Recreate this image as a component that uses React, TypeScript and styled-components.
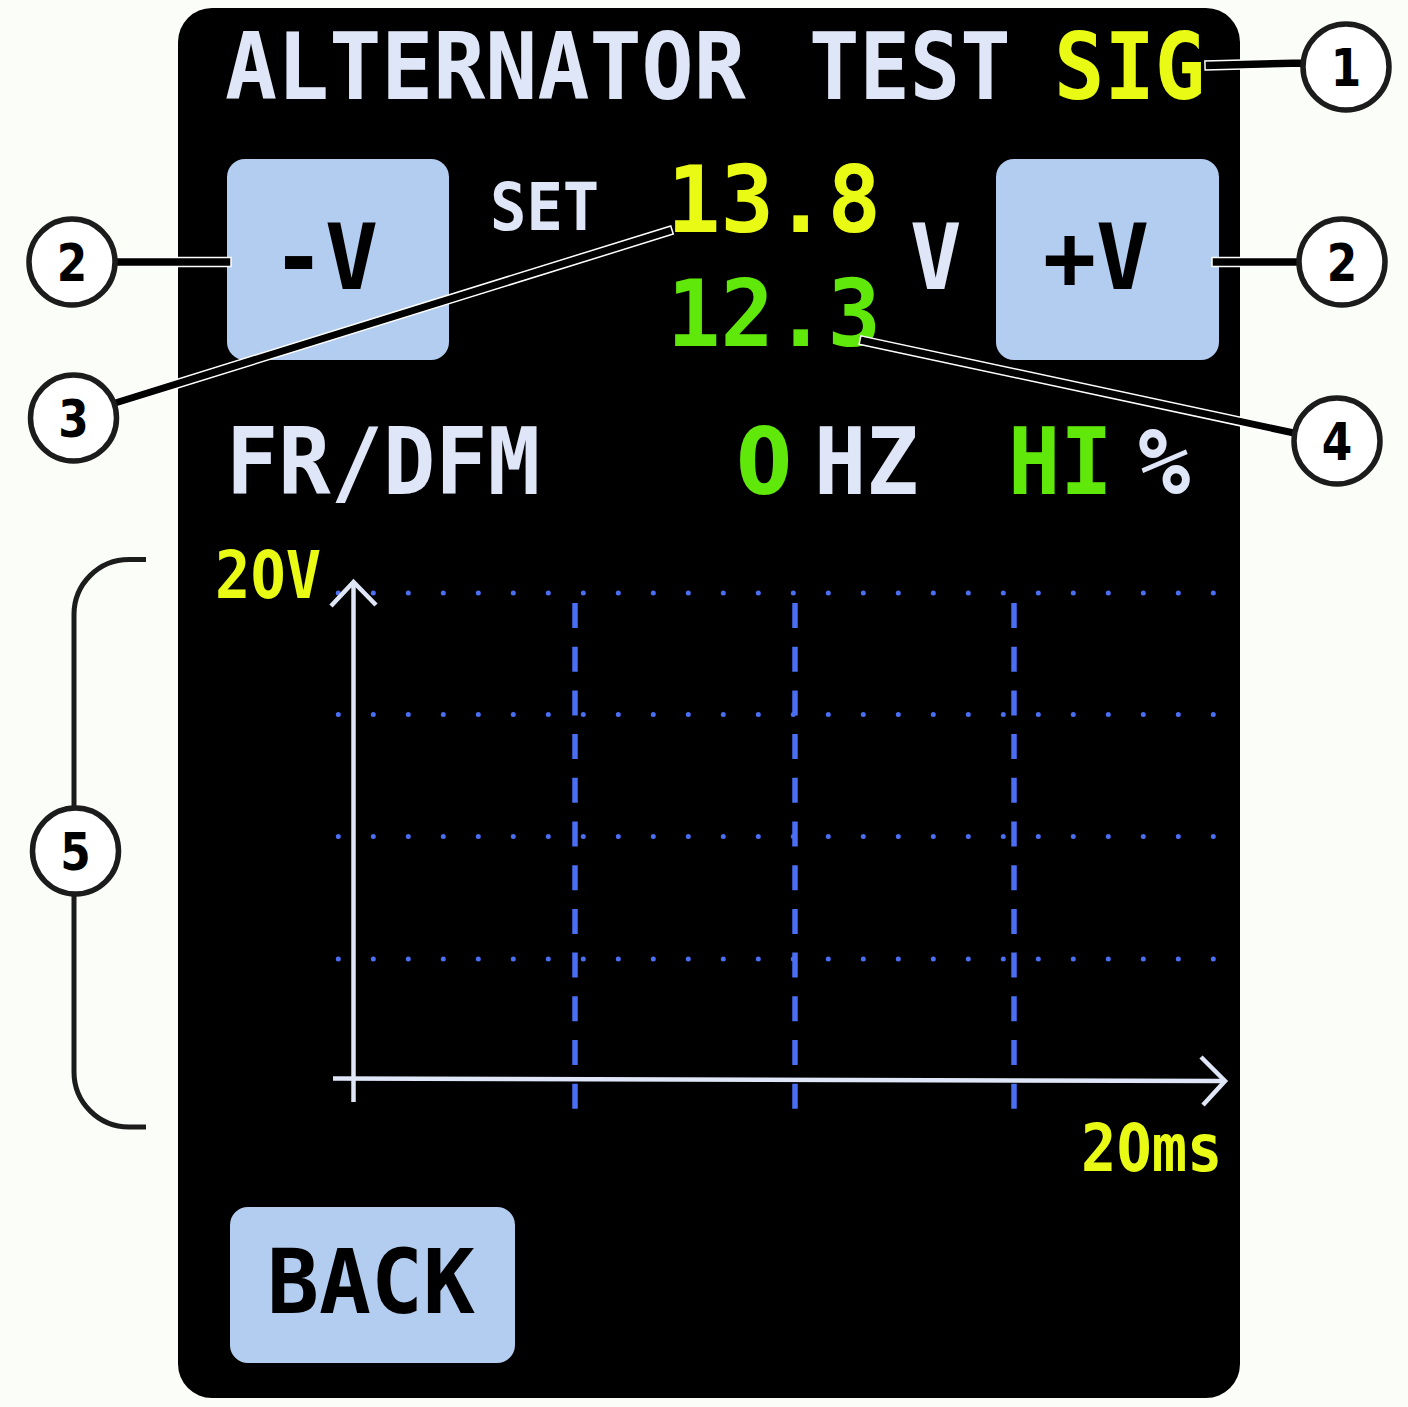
import React from "react";
import styled, { createGlobalStyle, css } from "styled-components";

const C = {
  page: "#fbfdf8",
  light: "#dfe6f8",
  yellow: "#e9fb14",
  green: "#61e80b",
  key: "#b3cdf1",
  grid: "#4a6ef4",
  ink: "#1c1c1c",
};

const GlobalStyle = createGlobalStyle`
  html, body { margin: 0; padding: 0; background: ${C.page}; }
  #root { width: 1408px; height: 1407px; }
`;

const mono = (size: number, sx: number) => css`
  display: block;
  flex: none;
  font-family: "DejaVu Sans Mono", "Liberation Mono", monospace;
  font-weight: bold;
  font-size: ${size}px;
  line-height: 1;
  white-space: nowrap;
  transform: scaleX(${sx});
  transform-origin: 0 0;
`;

/* plain (undotted) zero, kept on the monospace cell width */
const Zero = styled.span<{ $sx?: number }>`
  display: inline-flex;
  justify-content: center;
  width: 0.602em;
  font-family: "DejaVu Sans", "Liberation Sans", sans-serif;
  font-weight: bold;
  transform: scaleX(${(p) => p.$sx ?? 1});
`;

const Stage = styled.div`
  position: relative;
  box-sizing: border-box;
  width: 1408px;
  height: 1407px;
  padding: 8px 0 0 178px;
  overflow: hidden;
`;

const Screen = styled.main`
  width: 1062px;
  height: 1390px;
  background: #000;
  border-radius: 34px;
  display: flex;
  flex-direction: column;
  align-items: flex-start;
`;

/* ---------- title ---------- */
const TitleBar = styled.header`
  display: flex;
  margin: 13px 0 0 47px;
  height: 93px;
`;

const TitleWord = styled.span<{ $w: number; $sx: number; $ml?: number; $accent?: boolean }>`
  ${(p) => mono(93, p.$sx)};
  width: ${(p) => p.$w}px;
  margin-left: ${(p) => p.$ml ?? 0}px;
  color: ${(p) => (p.$accent ? C.yellow : C.light)};
`;

/* ---------- controls ---------- */
const Controls = styled.section`
  display: flex;
  align-items: flex-start;
  margin: 45px 0 0 49px;
  height: 201px;
`;

const Key = styled.button<{ $w: number; $h: number; $pl: number; $pt: number; $ml?: number; $mt?: number }>`
  flex: none;
  box-sizing: border-box;
  width: ${(p) => p.$w}px;
  height: ${(p) => p.$h}px;
  margin: ${(p) => p.$mt ?? 0}px 0 0 ${(p) => p.$ml ?? 0}px;
  padding: ${(p) => p.$pt}px 0 0 ${(p) => p.$pl}px;
  border: 0;
  border-radius: 18px;
  background: ${C.key};
  display: flex;
  align-items: flex-start;
  justify-content: flex-start;
  color: #000;
  cursor: pointer;
`;

const KeyLabel = styled.span<{ $size: number; $sx: number }>`
  ${(p) => mono(p.$size, p.$sx)};
  color: #000;
`;

const SetTag = styled.span`
  ${mono(65, 0.93)};
  width: 113px;
  margin: 15.7px 0 0 41px;
  color: ${C.light};
`;

const Readings = styled.div`
  flex: none;
  width: 215px;
  margin: -5.2px 0 0 64px;
  display: flex;
  flex-direction: column;
  gap: 21.6px;
`;

const Reading = styled.span<{ $tone: string }>`
  ${mono(93, 0.955)};
  color: ${(p) => p.$tone};
`;

const UnitV = styled.span`
  ${mono(90, 0.95)};
  width: 52px;
  margin: 53.8px 0 0 28px;
  color: ${C.light};
`;

/* ---------- status line ---------- */
const StatusRow = styled.section`
  display: flex;
  margin: 57.2px 0 0 48px;
  height: 92px;
`;

const Stat = styled.span<{ $w: number; $tone: string }>`
  ${mono(92, 0.945)};
  width: ${(p) => p.$w}px;
  color: ${(p) => p.$tone};
`;

/* ---------- scope ---------- */
const Scope = styled.section`
  display: flex;
  flex-direction: column;
  margin: 34.3px 0 0 37px;
`;

const ScopeTop = styled.div`
  display: flex;
  align-items: flex-start;
`;

const AxisTag = styled.span<{ $w?: number; $ml?: number; $mt?: number }>`
  ${mono(66, 0.89)};
  width: ${(p) => (p.$w ? `${p.$w}px` : "auto")};
  margin: ${(p) => p.$mt ?? 0}px 0 0 ${(p) => p.$ml ?? 0}px;
  color: ${C.yellow};
`;

const Plot = styled.svg`
  display: block;
  flex: none;
  margin-top: 28.7px;
`;

/* ---------- callouts overlay ---------- */
const Callouts = styled.svg`
  position: absolute;
  left: 0;
  top: 0;
  pointer-events: none;
`;

const bar = (x1: number, y1: number, x2: number, y2: number, t: number) => {
  const dx = x2 - x1;
  const dy = y2 - y1;
  const L = Math.hypot(dx, dy);
  const nx = (-dy / L) * (t / 2);
  const ny = (dx / L) * (t / 2);
  return `${x1 + nx},${y1 + ny} ${x2 + nx},${y2 + ny} ${x2 - nx},${y2 - ny} ${x1 - nx},${y1 - ny}`;
};

const leaders: [number, number, number, number, number][] = [
  [1205, 65.5, 1304, 63, 9],
  [108, 262, 231, 262, 9],
  [1212, 262, 1300, 262, 9],
  [112, 404, 672, 230, 8.5],
  [860, 340, 1294, 433, 8.5],
];

const badges: [number, number, string][] = [
  [1346, 67, "1"],
  [72, 262, "2"],
  [1342, 262, "2"],
  [73.5, 418, "3"],
  [1337, 441, "4"],
  [75.5, 851, "5"],
];

const Badge = ({ x, y, n }: { x: number; y: number; n: string }) => (
  <g transform={`translate(${x} ${y})`}>
    <circle r={43} fill="#fff" stroke={C.ink} strokeWidth={5.5} />
    <g transform="scale(0.86 1)">
      <text
        x={0}
        y={18.5}
        textAnchor="middle"
        fontFamily="'DejaVu Sans', 'Liberation Sans', sans-serif"
        fontWeight="bold"
        fontSize={51}
        fill="#000"
      >
        {n}
      </text>
    </g>
  </g>
);

const rowsY = [593, 714.5, 836.5, 959];
const colsX = [575, 795, 1014];

const ScopePlot = () => (
  <Plot width={906} height={540} viewBox="0 0 906 540">
    <g transform="translate(-326 -572)">
      {rowsY.map((y) => (
        <line
          key={y}
          x1={338.3}
          x2={1216}
          y1={y}
          y2={y}
          stroke={C.grid}
          strokeWidth={5}
          strokeLinecap="round"
          strokeDasharray="0 35"
        />
      ))}
      {colsX.map((x) => (
        <line
          key={x}
          x1={x}
          x2={x}
          y1={603}
          y2={1109}
          stroke={C.grid}
          strokeWidth={5.5}
          strokeDasharray="25 18.7"
        />
      ))}
      <line x1={353.5} y1={582} x2={353.5} y2={1102} stroke={C.light} strokeWidth={4.5} />
      <polyline points="331,606 353.5,582 376,605" fill="none" stroke={C.light} strokeWidth={4.5} />
      <line x1={333} y1={1078.5} x2={1224} y2={1081} stroke={C.light} strokeWidth={4.5} />
      <polyline points="1201,1057 1225,1081 1203,1105" fill="none" stroke={C.light} strokeWidth={4.5} />
    </g>
  </Plot>
);

export default function App() {
  return (
    <>
      <GlobalStyle />
      <Stage>
        <Screen>
          <TitleBar>
            <TitleWord $w={520} $sx={0.93}>ALTERNATOR</TitleWord>
            <TitleWord $w={196} $sx={0.9} $ml={64}>TEST</TitleWord>
            <TitleWord $w={170} $sx={0.9} $ml={48.5} $accent>SIG</TitleWord>
          </TitleBar>

          <Controls>
            <Key $w={222} $h={201} $pl={45} $pt={53.8}>
              <KeyLabel $size={90} $sx={0.98}>-V</KeyLabel>
            </Key>
            <SetTag>SET</SetTag>
            <Readings>
              <Reading $tone={C.yellow}>13.8</Reading>
              <Reading $tone={C.green}>12.3</Reading>
            </Readings>
            <UnitV>V</UnitV>
            <Key $w={223} $h={201} $pl={47} $pt={53.8} $ml={34}>
              <KeyLabel $size={90} $sx={0.98}>+V</KeyLabel>
            </Key>
          </Controls>

          <StatusRow>
            <Stat $w={512} $tone={C.light}>FR/DFM</Stat>
            <Stat $w={75.6} $tone={C.green}>
              <Zero $sx={0.92}>0</Zero>
            </Stat>
            <Stat $w={194.4} $tone={C.light}>HZ</Stat>
            <Stat $w={130} $tone={C.green}>HI</Stat>
            <Stat $w={60} $tone={C.light}>%</Stat>
          </StatusRow>

          <Scope>
            <ScopeTop>
              <AxisTag $w={111}>
                2<Zero $sx={0.84}>0</Zero>V
              </AxisTag>
              <ScopePlot />
            </ScopeTop>
            <AxisTag $ml={866} $mt={4.3}>
              2<Zero $sx={0.84}>0</Zero>ms
            </AxisTag>
          </Scope>

          <Key $w={285} $h={155.5} $pl={36.5} $pt={30.6} $ml={52} $mt={25}>
            <KeyLabel $size={89} $sx={0.97}>BACK</KeyLabel>
          </Key>
        </Screen>

        <Callouts width={1408} height={1407} viewBox="0 0 1408 1407">
          <path
            d="M146 559.5 H129 A55 55 0 0 0 74 614.5 V1072 A55 55 0 0 0 129 1127 H146"
            fill="none"
            stroke={C.ink}
            strokeWidth={5}
          />
          {leaders.map(([x1, y1, x2, y2, t], i) => (
            <polygon key={i} points={bar(x1, y1, x2, y2, t)} fill="#000" stroke="#fff" strokeWidth={1.5} />
          ))}
          {badges.map(([x, y, n], i) => (
            <Badge key={i} x={x} y={y} n={n} />
          ))}
        </Callouts>
      </Stage>
    </>
  );
}
